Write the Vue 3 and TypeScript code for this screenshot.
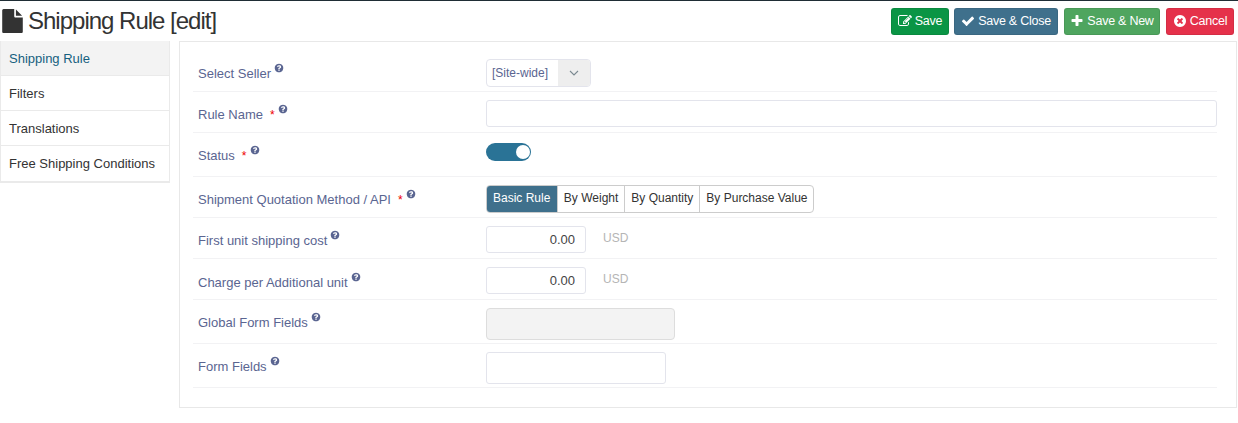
<script setup lang="ts">
const P = {
  file: 'M1152 512v-472q22 14 36 28l408 408q14 14 28 36h-472zm-128 32q0 40 28 68t68 28h544v1056q0 40-28 68t-68 28h-1344q-40 0-68-28t-28-68v-1600q0-40 28-68t68-28h800v544z',
  edit: 'M888 1184l116-116-152-152-116 116v56h96v96h56zm440-720q-16-16-33 1l-350 350q-17 17-1 33t33-1l350-350q17-17 1-33zm80 594v190q0 119-84.5 203.5t-203.5 84.5h-832q-119 0-203.5-84.5t-84.5-203.5v-832q0-119 84.5-203.5t203.5-84.5h832q63 0 117 25 15 7 18 23 3 17-9 29l-49 49q-14 14-32 8-23-6-45-6h-832q-66 0-113 47t-47 113v832q0 66 47 113t113 47h832q66 0 113-47t47-113v-126q0-13 9-22l64-64q15-15 35-7t20 29zm-96-738l288 288-672 672h-288v-288zm444 132l-92 92-288-288 92-92q28-28 68-28t68 28l152 152q28 28 28 68t-28 68z',
  check: 'M1671 566q0 40-28 68l-724 724-136 136q-28 28-68 28t-68-28l-136-136-362-362q-28-28-28-68t28-68l136-136q28-28 68-28t68 28l294 295 656-657q28-28 68-28t68 28l136 136q28 28 28 68z',
  plus: 'M1600 736v192q0 40-28 68t-68 28h-416v416q0 40-28 68t-68 28h-192q-40 0-68-28t-28-68v-416h-416q-40 0-68-28t-28-68v-192q0-40 28-68t68-28h416v-416q0-40 28-68t68-28h192q40 0 68 28t28 68v416h416q40 0 68 28t28 68z',
  times: 'M1277 1122q0-26-19-45l-181-181 181-181q19-19 19-45 0-27-19-46l-90-90q-19-19-46-19-26 0-45 19l-181 181-181-181q-19-19-45-19-27 0-46 19l-90 90q-19 19-19 46 0 26 19 45l181 181-181 181q-19 19-19 45 0 27 19 46l90 90q19 19 46 19 26 0 45-19l181-181 181 181q19 19 45 19 27 0 46-19l90-90q19-19 19-46zm387-226q0 209-103 385.5t-279.5 279.5-385.5 103-385.5-103-279.5-279.5-103-385.5 103-385.5 279.5-279.5 385.5-103 385.5 103 279.5 279.5 103 385.5z',
  help: 'M1024 1376v-192q0-14-9-23t-23-9h-192q-14 0-23 9t-9 23v192q0 14 9 23t23 9h192q14 0 23-9t9-23zm256-672q0-88-55.5-163t-138.5-116-170-41q-243 0-371 213-15 24 8 42l132 100q7 6 19 6 16 0 25-12 53-68 86-92 34-24 86-24 48 0 85.5 26t37.5 59q0 38-20 61t-68 45q-63 28-115.5 86.5t-52.5 125.5v36q0 14 9 23t23 9h192q14 0 23-9t9-23q0-19 21.5-49.5t54.5-49.5q32-18 49-28.5t46-35 44.5-48 28-60.5 12.5-81zm384 192q0 209-103 385.5t-279.5 279.5-385.5 103-385.5-103-279.5-279.5-103-385.5 103-385.5 279.5-279.5 385.5-103 385.5 103 279.5 279.5 103 385.5z',
}
const buttons = [
  { label: 'Save', cls: 'b-save', icon: P.edit },
  { label: 'Save & Close', cls: 'b-close', icon: P.check },
  { label: 'Save & New', cls: 'b-new', icon: P.plus },
  { label: 'Cancel', cls: 'b-cancel', icon: P.times },
]
const nav = ['Shipping Rule', 'Filters', 'Translations', 'Free Shipping Conditions']
const methods = ['Basic Rule', 'By Weight', 'By Quantity', 'By Purchase Value']
</script>

<template>
  <div class="page">
    <header class="head">
      <h1 class="title">
        <svg class="file" viewBox="128 0 1536 1792"><path :d="P.file" /></svg>
        <span>Shipping Rule [edit]</span>
      </h1>
      <div class="actions">
        <button v-for="b in buttons" :key="b.label" class="btn" :class="b.cls">
          <svg class="bi" viewBox="0 0 1792 1792"><path :d="b.icon" /></svg><span>{{ b.label }}</span>
        </button>
      </div>
    </header>
    <div class="body">
      <nav class="side">
        <a v-for="(n, i) in nav" :key="n" class="item" :class="{ on: i === 0 }">{{ n }}</a>
      </nav>
      <main class="panel">
        <div class="row">
          <label class="lab">Select Seller<svg class="q" viewBox="0 0 1792 1792"><path :d="P.help" /></svg></label>
          <div class="sel">
            <span class="sel-v">[Site-wide]</span>
            <span class="sel-a"><svg width="10" height="6" viewBox="0 0 10 6"><path d="M1 1l4 4 4-4" fill="none" stroke="#7c8a92" stroke-width="1.1" /></svg></span>
          </div>
        </div>
        <div class="row r-inp">
          <label class="lab">Rule Name<i class="req">*</i><svg class="q" viewBox="0 0 1792 1792"><path :d="P.help" /></svg></label>
          <input class="inp full" />
        </div>
        <div class="row r-status">
          <label class="lab">Status<i class="req">*</i><svg class="q" viewBox="0 0 1792 1792"><path :d="P.help" /></svg></label>
          <span class="tog"><span class="knob"></span></span>
        </div>
        <div class="row">
          <label class="lab">Shipment Quotation Method / API<i class="req">*</i><svg class="q" viewBox="0 0 1792 1792"><path :d="P.help" /></svg></label>
          <div class="seg">
            <span v-for="(m, i) in methods" :key="m" class="opt" :class="{ act: i === 0 }">{{ m }}</span>
          </div>
        </div>
        <div class="row r-inp">
          <label class="lab">First unit shipping cost<svg class="q" viewBox="0 0 1792 1792"><path :d="P.help" /></svg></label>
          <input class="inp num" value="0.00" /><span class="cur">USD</span>
        </div>
        <div class="row r-inp">
          <label class="lab l-charge">Charge per Additional unit<svg class="q" viewBox="0 0 1792 1792"><path :d="P.help" /></svg></label>
          <input class="inp num" value="0.00" /><span class="cur">USD</span>
        </div>
        <div class="row r-tall">
          <label class="lab">Global Form Fields<svg class="q" viewBox="0 0 1792 1792"><path :d="P.help" /></svg></label>
          <div class="glob"></div>
        </div>
        <div class="row r-tall">
          <label class="lab">Form Fields<svg class="q" viewBox="0 0 1792 1792"><path :d="P.help" /></svg></label>
          <input class="inp form" />
        </div>
      </main>
    </div>
  </div>
</template>

<style>
html, body { background: #fff; }
</style>

<style scoped>
.page { width: 1238px; height: 423px; box-sizing: border-box; border-top: 1px solid #1f2d35; font-family: "Liberation Sans", Arial, sans-serif; font-size: 13px; overflow: hidden; }
.head { height: 40px; display: flex; justify-content: space-between; align-items: flex-start; padding-right: 4px; }
.title { margin: 0; padding: 6px 0 0 2px; display: flex; align-items: center; gap: 5px; font-size: 24px; font-weight: 400; line-height: 28px; color: #333; letter-spacing: -1px; }
.file { width: 21px; height: 24px; fill: #333; }
.actions { display: flex; gap: 6px; padding-top: 7px; }
.btn { height: 27px; box-sizing: border-box; padding: 0 0 2px; border: 1px solid rgba(0,0,0,.08); border-radius: 3px; color: #fff; font: 12.5px "Liberation Sans", Arial, sans-serif; letter-spacing: -0.25px; display: flex; align-items: center; justify-content: center; gap: 3px; white-space: nowrap; }
.bi { width: 14px; height: 14px; fill: #fff; flex: none; }
.b-save { background: #0a9545; width: 58px; margin-right: -1px; }
.b-close { background: #3f708c; width: 104px; }
.b-new { background: #4fa55f; width: 96px; }
.b-cancel { background: #e5314a; width: 68px; }
.body { display: flex; gap: 9px; align-items: flex-start; }
.side { width: 170px; border: 1px solid #eaeaea; border-width: 0 1px 2px 1px; box-sizing: border-box; }
.item { display: block; height: 35px; box-sizing: border-box; padding: 10px 0 0 8px; line-height: 16px; color: #333; border-bottom: 1px solid #eaeaea; }
.item:last-child { border-bottom: 0; }
.item.on { background: #f3f3f3; color: #16607f; }
.panel { width: 1058px; height: 367px; box-sizing: border-box; border: 1px solid #e8e8e8; padding: 9px 19px 0 13px; }
.row { display: flex; align-items: flex-start; padding: 8px 0 4px; border-bottom: 1px solid #f2f2f4; }
.r-inp { padding-bottom: 5px; }
.r-tall { padding-bottom: 3px; }
.r-status { padding-bottom: 12px; }
.lab { width: 293px; flex: none; padding: 4px 0 0 5px; box-sizing: border-box; color: #5a6591; line-height: 16px; white-space: nowrap; }
.l-charge { padding-top: 5px; }
.req { font-style: normal; color: #e00; margin-left: 7px; font-size: 12px; }
.q { width: 10px; height: 10px; fill: #5a6591; margin-left: 3px; vertical-align: 5px; }
.sel { width: 105px; height: 28px; box-sizing: border-box; border: 1px solid #e3e4ec; border-radius: 4px; display: flex; overflow: hidden; font-size: 12px; color: #5a6591; }
.sel-v { flex: 1; padding-left: 5px; line-height: 26px; }
.sel-a { width: 32px; background: #eeeeee; display: flex; align-items: center; justify-content: center; }
.inp { display: block; box-sizing: border-box; height: 27px; border: 1px solid #e3e4ec; border-radius: 3px; background: #fff; font: 13px "Liberation Sans", Arial, sans-serif; color: #444; outline: 0; padding: 0 10px 0 7px; }
.full { width: 731px; }
.num { width: 100px; text-align: right; }
.form { width: 180px; height: 32px; }
.cur { color: #b5b5b5; font-size: 12px; margin-left: 17px; line-height: 24px; }
.tog { width: 45px; height: 18px; margin-top: 2px; border-radius: 9px; background: #2a7396; position: relative; }
.knob { position: absolute; right: 1px; top: 2px; width: 14px; height: 14px; border-radius: 50%; background: #fff; }
.seg { display: flex; height: 28px; box-sizing: border-box; border: 1px solid #ccc; border-radius: 4px; font-size: 12px; color: #333; overflow: hidden; }
.opt { padding: 0 6px; line-height: 24px; border-left: 1px solid #ccc; }
.opt:first-child { border-left: 0; }
.opt:last-child { padding-right: 5.5px; }
.act { background: #3f708c; color: #fff; margin: -1px 0 -1px -1px; padding: 1px 6.5px 1px 7px; }
.glob { width: 189px; height: 32px; box-sizing: border-box; background: #f3f3f3; border: 1px solid #ddd; border-radius: 4px; }
</style>
